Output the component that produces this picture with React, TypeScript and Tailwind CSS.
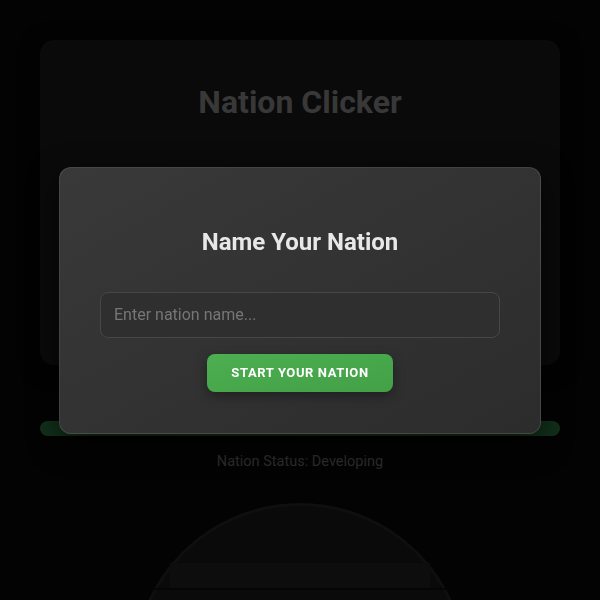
import React from "react";

export default function App() {
  return (
    <div
      className="relative min-h-[600px] h-[600px] overflow-hidden bg-[#030303]"
      style={{ fontFamily: "Roboto, 'Liberation Sans', sans-serif" }}
    >
      <div className="flex flex-col items-center pt-10">
        <div className="w-[520px] h-[325px] rounded-[14px] bg-[#0a0a0a] shadow-[0_4px_20px_rgba(0,0,0,0.5)] flex flex-col items-center pt-[42px]">
          <h1 className="text-[32px] font-bold text-[#383838] leading-10">Nation Clicker</h1>
        </div>
        <div className="mt-[56px] w-[520px] h-[15px] rounded-full bg-[#12301a]" />
        <div className="mt-[15px] text-[14.5px] text-[#2c2c2c]">Nation Status: Developing</div>
        <div className="mt-[30px] w-[334px] h-[334px] shrink-0 rounded-full bg-[#0a0a0a] border-[3px] border-[#0f0f0f] flex flex-col items-center pt-[57px]">
          <div className="w-[260px] h-[25px] bg-[#0c0d0c]" />
          <div className="w-[300px] h-[2px] bg-[#050505]" />
        </div>
      </div>

      <div className="fixed inset-0 flex items-center justify-center">
        <div className="w-[482px] h-[267px] rounded-[12px] border border-white/10 bg-gradient-to-br from-[#393939] to-[#2c2c2c] shadow-[0_10px_30px_rgba(0,0,0,0.6)] flex flex-col items-center px-10 pt-[58px]">
          <h2 className="text-[24px] font-bold text-[#e8e8e8] leading-8">Name Your Nation</h2>
          <input
            type="text"
            placeholder="Enter nation name..."
            className="mt-[34px] w-full h-[46px] rounded-[8px] border border-[#474747] bg-[#2f2f2f] px-[13px] text-[16px] text-[#e0e0e0] placeholder:text-[#767676] outline-none"
          />
          <button className="mt-[16px] h-[38px] px-6 rounded-[8px] bg-gradient-to-br from-[#4caf50] to-[#43a047] text-white text-[13px] font-bold tracking-[0.6px] uppercase shadow-[0_4px_12px_rgba(0,0,0,0.35)]">
            Start Your Nation
          </button>
        </div>
      </div>
    </div>
  );
}
